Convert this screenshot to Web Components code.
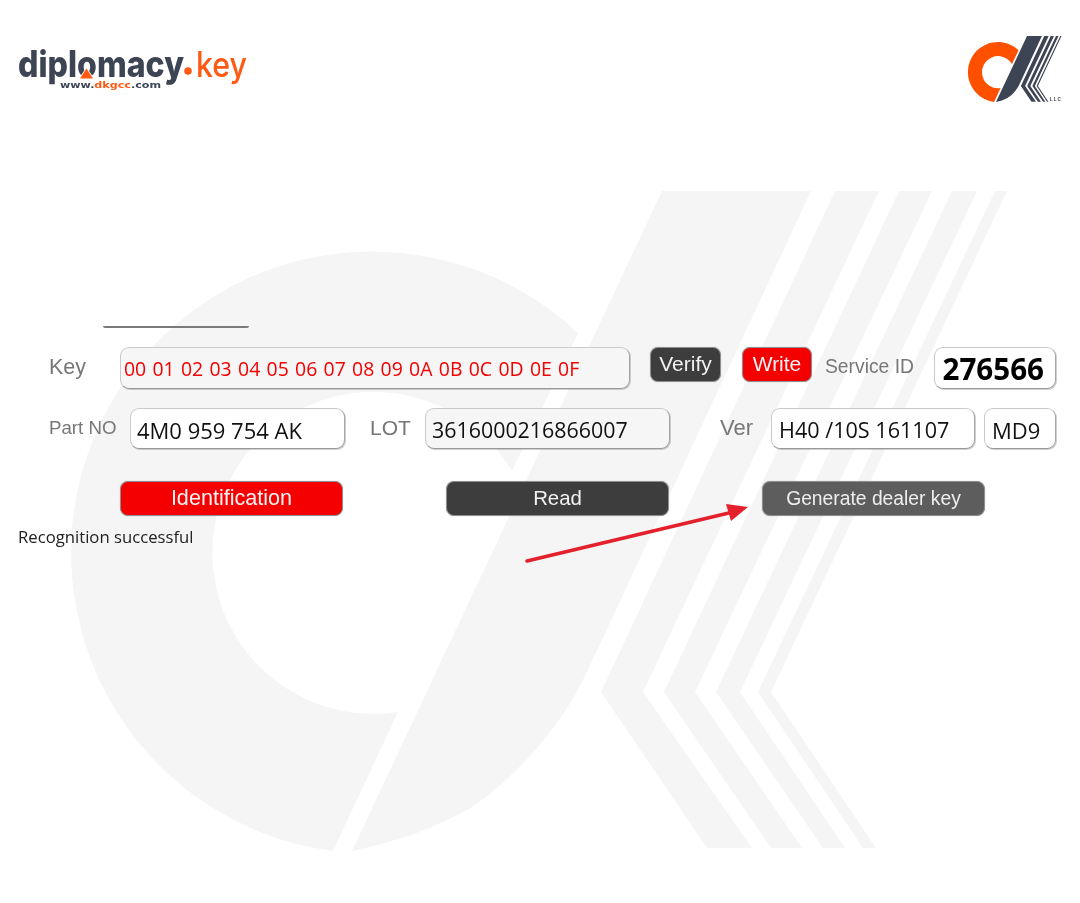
<!DOCTYPE html>
<html lang="en"><head><meta charset="utf-8"><title>Generate dealer key</title>
<style>html,body{margin:0;padding:0;background:#fff}</style></head>
<body>
<tool-page>
  <brand-header slot="header"></brand-header>
  <tool-panel>
    <form-row style="--pl:49px;--h:42px;--mt:19px">
      <field-label style="--w:71px;--fs:21.5px;--ty:0px">Key</field-label>
      <value-box style="--w:510px;--bg:#f6f6f6;--c:#f40000;--fs:19.4px;--pad:3px;--ws:1.3px;--ty:1px">00 01 02 03 04 05 06 07 08 09 0A 0B 0C 0D 0E 0F</value-box>
      <action-button style="--w:71px;--ml:20px;--bg:#3d3d3d;--fs:21px;--self:flex-start;--h:35px;--mt:1px;--ty:-1px">Verify</action-button>
      <action-button style="--w:70px;--ml:21px;--bg:#f40000;--fs:21px;--self:flex-start;--h:35px;--mt:1px;--ty:-1px">Write</action-button>
      <field-label style="--w:89px;--ml:13px;--fs:19.3px;--ty:-1px">Service ID</field-label>
      <value-box style="--w:122px;--ml:20px;--c:#000;--fs:29.6px;--fw:700;--pad:7.5px;--ty:1px">276566</value-box>
    </form-row>
    <form-row style="--pl:49px;--h:41px;--mt:19px">
      <field-label style="--w:81px;--fs:18.7px;--ty:0px">Part NO</field-label>
      <value-box style="--w:215px;--c:#111;--fs:22px;--pad:6px;--ty:1px">4M0 959 754 AK</value-box>
      <field-label style="--w:40px;--ml:25px;--fs:21px;--ty:-1px">LOT</field-label>
      <value-box style="--w:245px;--ml:15px;--bg:#f6f6f6;--c:#111;--fs:21.4px;--pad:6px;--ty:1px">3616000216866007</value-box>
      <field-label style="--w:35px;--ml:50px;--fs:22px;--ty:0px">Ver</field-label>
      <value-box style="--w:204px;--c:#111;--ml:16px;--fs:21.6px;--pad:7px;--ty:1px">H40 /10S 161107</value-box>
      <value-box style="--w:72px;--ml:9px;--c:#111;--fs:22px;--pad:7px;--ty:1px">MD9</value-box>
    </form-row>
    <form-row style="--pl:120px;--h:35px;--mt:32px">
      <action-button style="--w:223px;--bg:#f40000;--fs:21.6px;--ty:-1px">Identification</action-button>
      <action-button style="--w:223px;--ml:103px;--bg:#3d3d3d;--fs:20.4px">Read</action-button>
      <action-button style="--w:223px;--ml:93px;--bg:#5d5d5d;--fs:19.3px;--c:#eee">Generate dealer key</action-button>
    </form-row>
    <status-line>Recognition successful</status-line>
  </tool-panel>
</tool-page>
<script>
const RING='M578,333 A301,301 0 1 0 333,851 L398,712 A161,161 0 1 1 512,471 Z';
const SLASH='M662,191 L811,191 L602,640 L590,665 C560,735 500,790 467,810 C430,830 395,842 352,851 Z';
const BANDS=[
 'M835,191 L879,191 L643,692 L752,848 L707,848 L601,692 Z',
 'M899,191 L932,191 L695,692 L802,848 L771,848 L664,692 Z',
 'M952,191 L977,191 L740,692 L845,848 L823,848 L716,692 Z',
 'M995,191 L1007,191 L771,692 L876,848 L863,848 L758,692 Z'].join(' ');
function def(name,html){
  customElements.define(name,class extends HTMLElement{
    constructor(){super();this.attachShadow({mode:'open'}).innerHTML=html;}
  });
}
def('tool-page',`<style>
:host{display:block;position:relative;width:1080px;height:903px;overflow:hidden;background:#fff}
svg.wm{position:absolute;left:0;top:0;width:1080px;height:903px}
.arrow{position:absolute;left:0;top:0;width:1080px;height:903px;pointer-events:none}
.content{position:relative;display:flex;flex-direction:column}
</style>
<svg class="wm" viewBox="0 0 1080 903"><path fill="#f5f5f5" d="${RING} ${SLASH} ${BANDS}"/></svg>
<div class="content"><slot name="header"></slot><slot></slot></div>
<svg class="arrow" viewBox="0 0 1080 903"><path d="M527,561 L733,512" stroke="#e3202c" stroke-width="3.6" stroke-linecap="round" fill="none"/><path d="M748,507 L726,504 L731,521 Z" fill="#e3202c"/></svg>`);
def('brand-header',`<style>
:host{display:block;height:120px}
svg{display:block;width:1080px;height:120px;filter:blur(.35px)}
</style>
<svg viewBox="0 0 1080 120">
  <text x="18" y="77" textLength="166" lengthAdjust="spacingAndGlyphs" font-family="Inter, sans-serif" font-weight="800" font-size="37" fill="#3d4453">diplomacy</text>
  <path d="M86.5,68.5 L93,78.5 L80,78.5 Z" fill="#ff5a14" stroke="#fff" stroke-width="1.6" paint-order="stroke"/>
  <circle cx="188" cy="71" r="3.8" fill="#ff5a14"/>
  <text x="196" y="77" textLength="51" lengthAdjust="spacingAndGlyphs" font-family="Inter, sans-serif" font-weight="500" font-size="35" fill="#ff5a14">key</text>
  <text x="60" y="88" textLength="101" lengthAdjust="spacingAndGlyphs" font-family="'DejaVu Sans', sans-serif" font-weight="700" font-size="9.5" fill="#3d4453">www.<tspan fill="#ff5a14">dkgcc</tspan>.com</text>
  <g transform="translate(960.8 16.9) scale(.1)">
    <path fill="#ff5000" d="${RING}"/>
    <path fill="#3d4453" d="${SLASH} ${BANDS}"/>
  </g>
  <text x="1050" y="101" font-family="'Liberation Sans', sans-serif" font-weight="700" font-size="4.5" letter-spacing="1" fill="#3d4453">LLC</text>
</svg>`);
def('tool-panel',`<style>
:host{display:block;margin-top:206px;filter:blur(.3px)}
.rule{width:146px;height:2px;margin-left:103px;background:#7a7a7a;border-radius:0 0 3px 3px}
</style><div class="rule"></div><slot></slot>`);
def('form-row',`<style>
:host{display:flex;align-items:center;box-sizing:border-box;height:var(--h);margin-top:var(--mt);padding-left:var(--pl)}
</style><slot></slot>`);
def('field-label',`<style>
:host{display:block;flex:none;width:var(--w);margin-left:var(--ml,0);font:400 var(--fs)/1.2 "Liberation Sans",sans-serif;color:#777;white-space:nowrap;transform:translateY(var(--ty,0))}
</style><slot></slot>`);
def('value-box',`<style>
:host{display:flex;align-items:center;flex:none;box-sizing:border-box;width:var(--w);height:100%;margin-left:var(--ml,0);padding-left:var(--pad);background:var(--bg,#fff);color:var(--c);font:var(--fw,400) var(--fs)/1 "Open Sans",sans-serif;word-spacing:var(--ws,0);white-space:nowrap;border:1.5px solid #c9c9c9;border-right-color:#a5a5a5;border-bottom-color:#999;border-radius:9px;box-shadow:1px 1px 0 rgba(120,120,120,.35)}
span{display:block;transform:translateY(var(--ty,0))}
</style><span><slot></slot></span>`);
def('action-button',`<style>
:host{display:flex;align-items:center;justify-content:center;flex:none;box-sizing:border-box;width:var(--w);height:var(--h);align-self:var(--self,center);margin-left:var(--ml,0);background:var(--bg);color:var(--c,#f2f2f2);font:400 var(--fs)/1 "Liberation Sans",sans-serif;white-space:nowrap;border:1px solid #8f8f8f;border-radius:8px;box-shadow:0 0 1px rgba(0,0,0,.35)}
span{display:block;transform:translateY(var(--ty,0))}
</style><span><slot></slot></span>`);
def('status-line',`<style>
:host{display:block;margin-top:10px;padding-left:18px;font:400 16.7px/22px "Open Sans",sans-serif;color:#222}
</style><slot></slot>`);
</script>
</body></html>
